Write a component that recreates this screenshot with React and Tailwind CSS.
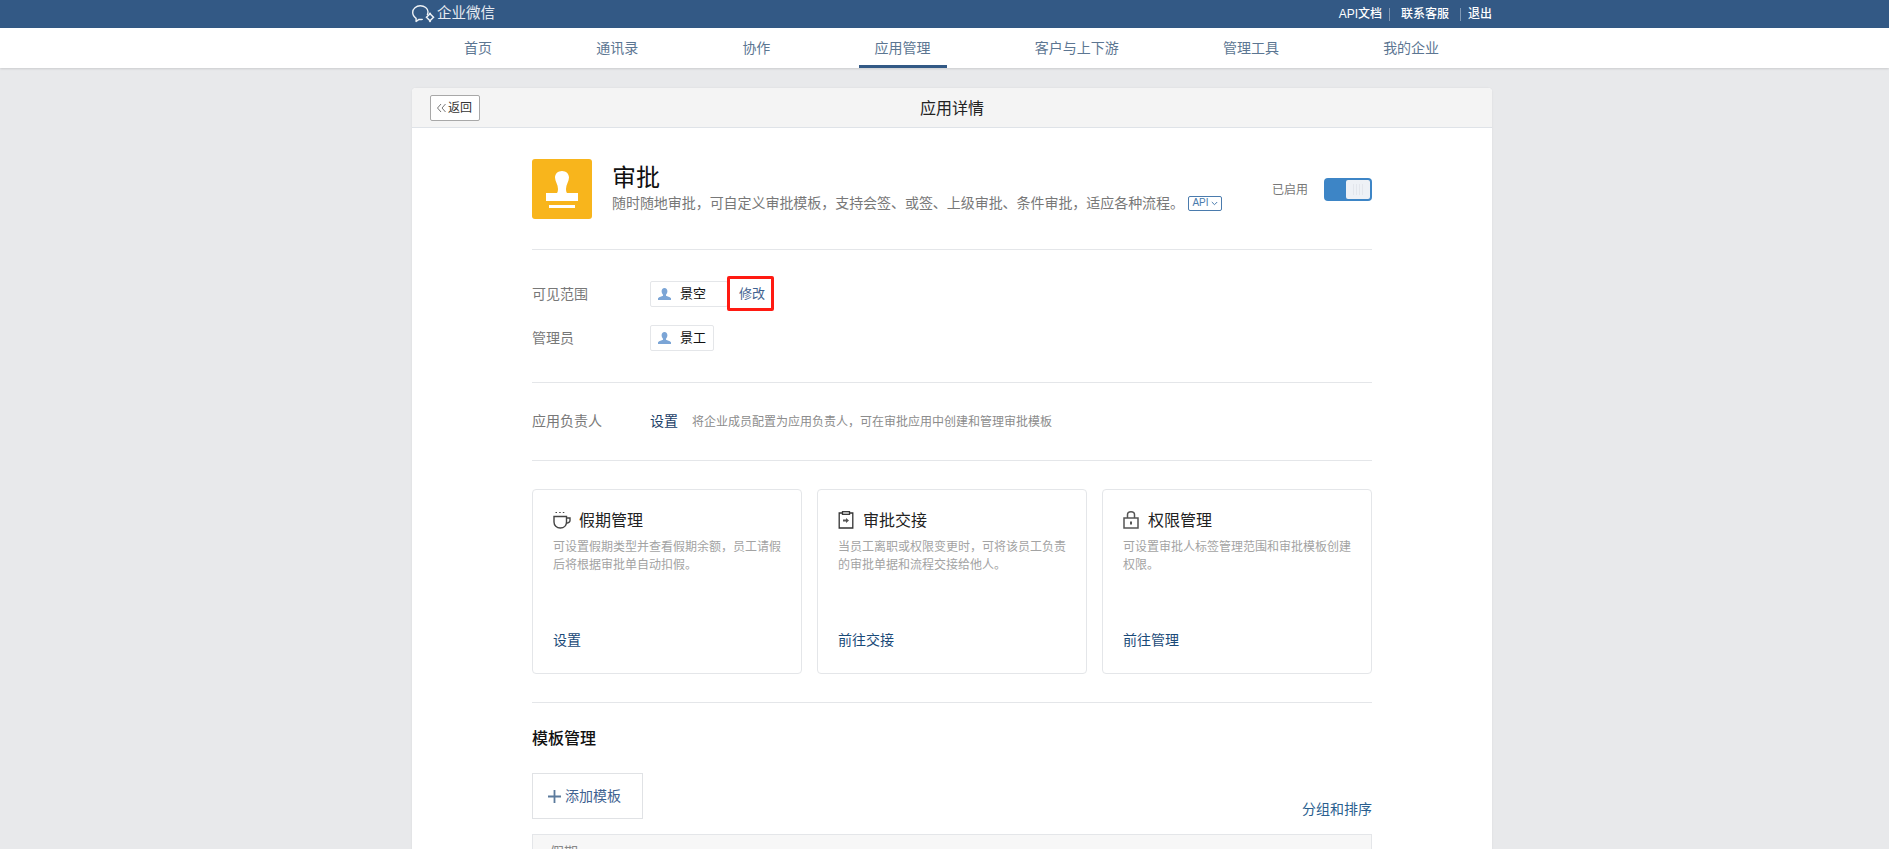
import React from 'react';

const tabs = ['首页', '通讯录', '协作', '应用管理', '客户与上下游', '管理工具', '我的企业'];

function Logo() {
  return (
    <svg width="23" height="18" viewBox="0 0 23 18" fill="none" stroke="#eef2f6" strokeWidth="1.400">
      <path d="M15.400 9.500c.4-.9.600-1.800.600-2.700C16 3.200 12.400.8 8.300.8S.7 3.600.7 7.300c0 2.600 1.300 4.700 3.400 6v3.200l2.900-2.100c1 .2 2.200.2 3.300 0" strokeLinecap="round" strokeLinejoin="round" />
      <path d="M18 8.800l3.500 3.500-3.500 3.500-3.500-3.500z" strokeWidth="1.500" />
      <path d="M18 7.300l1.200 1.200-1.200 1.200-1.200-1.200zM18 15l1.200 1.200-1.200 1.200-1.200-1.200z" fill="#eef2f6" stroke="none" />
    </svg>
  );
}

function Stamp() {
  return (
    <svg width="60" height="60" viewBox="0 0 60 60">
      <path d="M30 12c4 0 7 2.800 7 6.500 0 3.500-3 7-3 11.500 0 1.500.3 3 1 4h11v8H14v-8h11c.7-1 1-2.500 1-4 0-4.500-3-8-3-11.500 0-3.700 3-6.500 7-6.500z" fill="#fff" />
      <rect x="17" y="46" width="26" height="3" fill="#fff" />
    </svg>
  );
}

function Person() {
  return (
    <svg width="13" height="12" viewBox="0 0 13 12" fill="#7ba5d6">
      <path d="M6.500 0C8.300 0 9.400 1.300 9.400 3.200c0 1.500-.7 2.800-1.400 3.500v1.100c1.500.7 3.600 1.100 5 2.400V12H0v-1.800c1.400-1.300 3.500-1.700 5-2.400V6.700C4.300 6 3.600 4.700 3.600 3.200 3.600 1.300 4.700 0 6.500 0z" />
    </svg>
  );
}

function Tag({ name, className }) {
  return (
    <span className={`flex h-[26px] items-center rounded-[2px] border border-[#e4e6e9] pl-[7px] text-[13px] text-[#111] ${className}`}>
      <Person />
      <span className="ml-[9px]">{name}</span>
    </span>
  );
}

function CupIcon() {
  return (
    <svg width="19" height="18" viewBox="0 0 19 18" fill="none" stroke="#444" strokeWidth="1.400">
      <path d="M1 5.500h12.500v5.500c0 3.400-2.500 6-6.200 6S1 14.400 1 11z" />
      <path d="M13.500 7H17v2.500c0 1.200-1.600 2.500-3.800 2.800" />
      <path d="M2.500 1.500h1.500M6.200 1.500h1.500M9.800 1.500h1.500" strokeWidth="1.200" />
    </svg>
  );
}

function ClipIcon() {
  return (
    <svg width="16" height="18" viewBox="0 0 16 18" fill="none" stroke="#333" strokeWidth="1.300">
      <path d="M4.500 2H1.200v15h13.600V2h-3.300" />
      <rect x="4.500" y="0.700" width="7" height="2.600" fill="#fff" />
      <path d="M5 8.500h3V7l3 2.500-3 2.500v-1.500H5z" fill="#555" stroke="none" />
    </svg>
  );
}

function LockIcon() {
  return (
    <svg width="16" height="18" viewBox="0 0 16 18" fill="none" stroke="#555" strokeWidth="1.500">
      <rect x="1" y="7" width="14" height="10" />
      <path d="M4.500 7V3.800C4.500 2 6 .8 8 .8s3.500 1.200 3.500 3V7" />
      <path d="M8 10.500v3" strokeWidth="2" />
    </svg>
  );
}

const cards = [
  { icon: <CupIcon />, gap: 'ml-[7px]', title: '假期管理', desc: '可设置假期类型并查看假期余额，员工请假后将根据审批单自动扣假。', link: '设置' },
  { icon: <ClipIcon />, gap: 'ml-[9px]', title: '审批交接', desc: '当员工离职或权限变更时，可将该员工负责的审批单据和流程交接给他人。', link: '前往交接' },
  { icon: <LockIcon />, gap: 'ml-[9px]', title: '权限管理', desc: '可设置审批人标签管理范围和审批模板创建权限。', link: '前往管理' },
];

export default function App() {
  return (
    <div className="h-screen overflow-hidden bg-[#e8e9eb] font-['Liberation_Sans','Noto_Sans_CJK_SC',sans-serif] text-[14px]">
      <div className="h-[28px] bg-[#335985]">
        <div className="ml-[412px] flex h-full w-[1080px] items-center justify-between text-white">
          <div className="flex items-center">
            <Logo />
            <span className="ml-[2px] text-[14.500px] text-[#e6ebf1]">企业微信</span>
          </div>
          <div className="flex items-center text-[12px] font-medium">
            <span>API文档</span>
            <span className="ml-[7px] mr-[11px] h-[13px] w-px bg-[#7f97b3]" />
            <span>联系客服</span>
            <span className="ml-[11px] mr-[7px] h-[13px] w-px bg-[#7f97b3]" />
            <span>退出</span>
          </div>
        </div>
      </div>

      <div className="h-[40px] bg-white shadow-[0_1px_2px_rgba(0,0,0,0.12)]">
        <div className="ml-[448px] flex h-full gap-[72.200px]">
          {tabs.map((t, idx) => (
            <div
              key={idx}
              className={`flex h-full items-center border-b-[3px] px-4 pt-[3px] text-[14px] text-[#5c7692] ${t === '应用管理' ? 'border-[#335985]' : 'border-transparent'}`}
            >
              {t}
            </div>
          ))}
        </div>
      </div>

      <div className="ml-[412px] mt-[20px] w-[1080px] rounded-t-[4px] bg-white shadow-[0_0_2px_rgba(0,0,0,0.08)]">
        <div className="grid h-[40px] grid-cols-[1fr_auto_1fr] items-center rounded-t-[4px] border-b border-[#dfe3e8] bg-[#f4f4f4] px-[18px]">
          <div>
            <button className="flex h-[26px] w-[50px] items-center justify-center rounded-[2px] border border-[#a8a8a8] bg-white text-[12px] text-[#333]">
              <svg width="11" height="10" viewBox="0 0 11 10" fill="none" stroke="#777" strokeWidth="1" className="mr-[1px]">
                <path d="M5 1L1.500 5 5 9M9.500 1L6 5l3.500 4" />
              </svg>
              <span className="mr-[2px]">返回</span>
            </button>
          </div>
          <div className="pt-[2px] text-[16px] text-[#222]">应用详情</div>
          <div />
        </div>

        <div className="mx-[120px]">
          <div className="flex items-start border-b border-[#e4e6e9] pb-[30px] pt-[31px]">
            <div className="h-[60px] w-[60px] rounded-[3px] bg-[#f8b51c]">
              <Stamp />
            </div>
            <div className="ml-[20px] flex-1">
              <div className="mt-[4px] text-[24px] leading-[30px] text-[#111]">审批</div>
              <div className="-mt-[1px] flex items-center text-[14px] leading-[22px] text-[#787878]">
                <span className="tracking-[-0.05px]">随时随地审批，可自定义审批模板，支持会签、或签、上级审批、条件审批，适应各种流程。</span>
                <span className="ml-[4px] flex h-[15px] w-[34px] items-center justify-center rounded-[2px] border border-[#4a7bad] text-[10px] text-[#4a7bad]">
                  API
                  <svg width="7" height="5" viewBox="0 0 7 5" fill="none" stroke="#4a7bad" className="ml-[2px]">
                    <path d="M.8 1l2.700 2.700L6.200 1" />
                  </svg>
                </span>
              </div>
            </div>
            <div className="mt-[19px] flex items-center">
              <span className="text-[12px] text-[#787878]">已启用</span>
              <div className="ml-[16px] flex h-[23px] w-[48px] justify-end rounded-[4px] bg-[#3d85c6] p-[2px]">
                <div className="flex h-[19px] w-[24px] items-center justify-center gap-[2px] rounded-[2px] bg-[#eef1f6]">
                  <span className="h-[11px] w-px bg-[#e3e6ec]" />
                  <span className="h-[11px] w-px bg-[#e3e6ec]" />
                  <span className="h-[11px] w-px bg-[#e3e6ec]" />
                  <span className="h-[11px] w-px bg-[#e3e6ec]" />
                </div>
              </div>
            </div>
          </div>

          <div className="border-b border-[#e4e6e9] pb-[31px] pt-[31px]">
            <div className="flex items-center">
              <span className="w-[118px] text-[#787878]">可见范围</span>
              <Tag name="景空" className="w-[78px]" />
              <span className="relative ml-[11px] text-[13px] leading-[26px] text-[#3f6290]">
                修改
                <span className="absolute -bottom-[4px] -left-[12px] -right-[9px] -top-[5px] rounded-[2px] border-[3px] border-[#ff1a12]" />
              </span>
            </div>
            <div className="mt-[18px] flex items-center">
              <span className="w-[118px] text-[#787878]">管理员</span>
              <Tag name="景工" className="w-[64px]" />
            </div>
          </div>

          <div className="flex h-[78px] items-center border-b border-[#e4e6e9]">
            <span className="w-[118px] text-[#787878]">应用负责人</span>
            <span className="text-[#1a4068]">设置</span>
            <span className="ml-[14px] text-[12px] text-[#8c8c8c]">将企业成员配置为应用负责人，可在审批应用中创建和管理审批模板</span>
          </div>

          <div className="grid grid-cols-3 gap-[15px] border-b border-[#e4e6e9] pb-[28px] pt-[28px]">
            {cards.map((c, idx) => (
              <div key={idx} className="flex h-[185px] flex-col rounded-[4px] border border-[#e4e6e9] px-[20px] pb-[23px] pt-[18px]">
                <div className="flex h-[24px] items-center">
                  {c.icon}
                  <span className={`${c.gap} pt-[2px] text-[16px] text-[#222]`}>{c.title}</span>
                </div>
                <p className="mt-[6px] text-[12px] leading-[18px] text-[#a3a3a3]">{c.desc}</p>
                <a className="mt-auto leading-[20px] text-[#1a4a78]">{c.link}</a>
              </div>
            ))}
          </div>

          <div className="pt-[24px]">
            <div className="text-[16px] font-medium leading-[24px] text-[#111]">模板管理</div>
            <div className="mt-[22px] flex items-end justify-between">
              <button className="flex h-[46px] w-[111px] items-center justify-center border border-[#e0e2e5] pr-[6px] text-[#3f6290]">
                <svg width="13" height="13" viewBox="0 0 13 13" stroke="#5b7a9c" strokeWidth="1.800" className="mr-[4px]">
                  <path d="M6.500 0v13M0 6.500h13" />
                </svg>
                添加模板
              </button>
              <span className="leading-[20px] text-[#2a5f8f]">分组和排序</span>
            </div>
            <div className="mt-[15px] h-[60px] border border-[#e4e6e9] bg-[#f7f7f7] px-[17px] pt-[7px] text-[#888]">假期</div>
          </div>
        </div>
      </div>
    </div>
  );
}
